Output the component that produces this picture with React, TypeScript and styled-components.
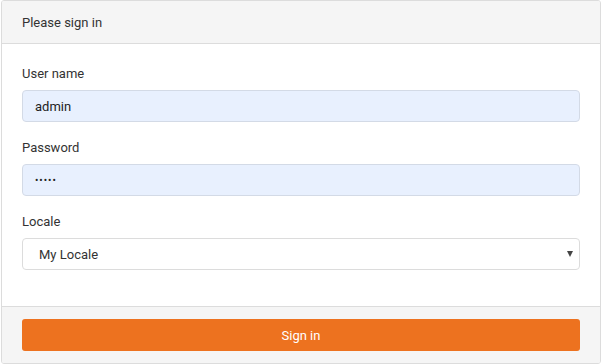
import React from "react";
import styled, { createGlobalStyle } from "styled-components";

const GlobalStyle = createGlobalStyle`
  html, body {
    margin: 0;
    padding: 0;
    background: #fff;
  }
  body {
    font-family: Roboto, "Liberation Sans", Arial, sans-serif;
    font-size: 13px;
    color: #333;
  }
`;

export default function App() {
  return (
    <>
      <GlobalStyle />
      <Card>
        <Header>Please sign in</Header>
        <Body>
          <Group>
            <Label htmlFor="username">User name</Label>
            <Input id="username" type="text" defaultValue="admin" $filled />
          </Group>
          <Group>
            <Label htmlFor="password">Password</Label>
            <Input id="password" type="password" defaultValue="admin" $filled $small />
          </Group>
          <Group>
            <Label htmlFor="locale">Locale</Label>
            <SelectWrap>
              <Select id="locale" defaultValue="my">
                <option value="my">My Locale</option>
              </Select>
              <Caret />
            </SelectWrap>
          </Group>
        </Body>
        <Footer>
          <SubmitButton type="button">Sign in</SubmitButton>
        </Footer>
      </Card>
    </>
  );
}

const Card = styled.div`
  box-sizing: border-box;
  width: 600px;
  height: 364px;
  margin-left: 1px;
  border: 1px solid #dcdcdc;
  border-radius: 3px;
  display: flex;
  flex-direction: column;
  overflow: hidden;
`;

const Header = styled.div`
  height: 42px;
  padding: 0 20px;
  display: flex;
  align-items: center;
  background: #f5f5f5;
  border-bottom: 1px solid #dcdcdc;
  color: #333;
`;

const Body = styled.div`
  padding: 20px;
  flex: 1;
`;

const Group = styled.div`
  display: flex;
  flex-direction: column;
  margin-bottom: 16px;

  &:last-child {
    margin-bottom: 0;
  }
`;

const Label = styled.label`
  line-height: 18px;
  padding-top: 1px;
  margin-bottom: 7px;
  color: #333;
`;

const Input = styled.input<{ $filled?: boolean; $small?: boolean }>`
  box-sizing: border-box;
  height: 32px;
  width: 100%;
  padding: 0 12px;
  border: 1px solid ${(p) => (p.$filled ? "#d3dae6" : "#dcdcdc")};
  border-radius: 4px;
  background: ${(p) => (p.$filled ? "#e8f0fe" : "#fff")};
  font-family: inherit;
  font-size: ${(p) => (p.$small ? "10px" : "13px")};
  letter-spacing: ${(p) => (p.$small ? "1px" : "normal")};
  color: #222;
  outline: none;
`;

const SelectWrap = styled.div`
  position: relative;
`;

const Select = styled.select`
  box-sizing: border-box;
  height: 32px;
  width: 100%;
  padding: 0 16px;
  border: 1px solid #dcdcdc;
  border-radius: 4px;
  background: #fff;
  font-family: inherit;
  font-size: 13px;
  color: #333;
  appearance: none;
  outline: none;
`;

const Caret = styled.span`
  position: absolute;
  right: 7px;
  top: 13px;
  width: 0;
  height: 0;
  border-left: 3.5px solid transparent;
  border-right: 3.5px solid transparent;
  border-top: 6px solid #444;
  pointer-events: none;
`;

const Footer = styled.div`
  padding: 12px 20px;
  background: #f5f5f5;
  border-top: 1px solid #dcdcdc;
`;

const SubmitButton = styled.button`
  display: block;
  width: 100%;
  height: 32px;
  border: none;
  border-radius: 3px;
  background: #ed721f;
  color: #fff;
  font-family: inherit;
  font-size: 13px;
  cursor: pointer;
`;
